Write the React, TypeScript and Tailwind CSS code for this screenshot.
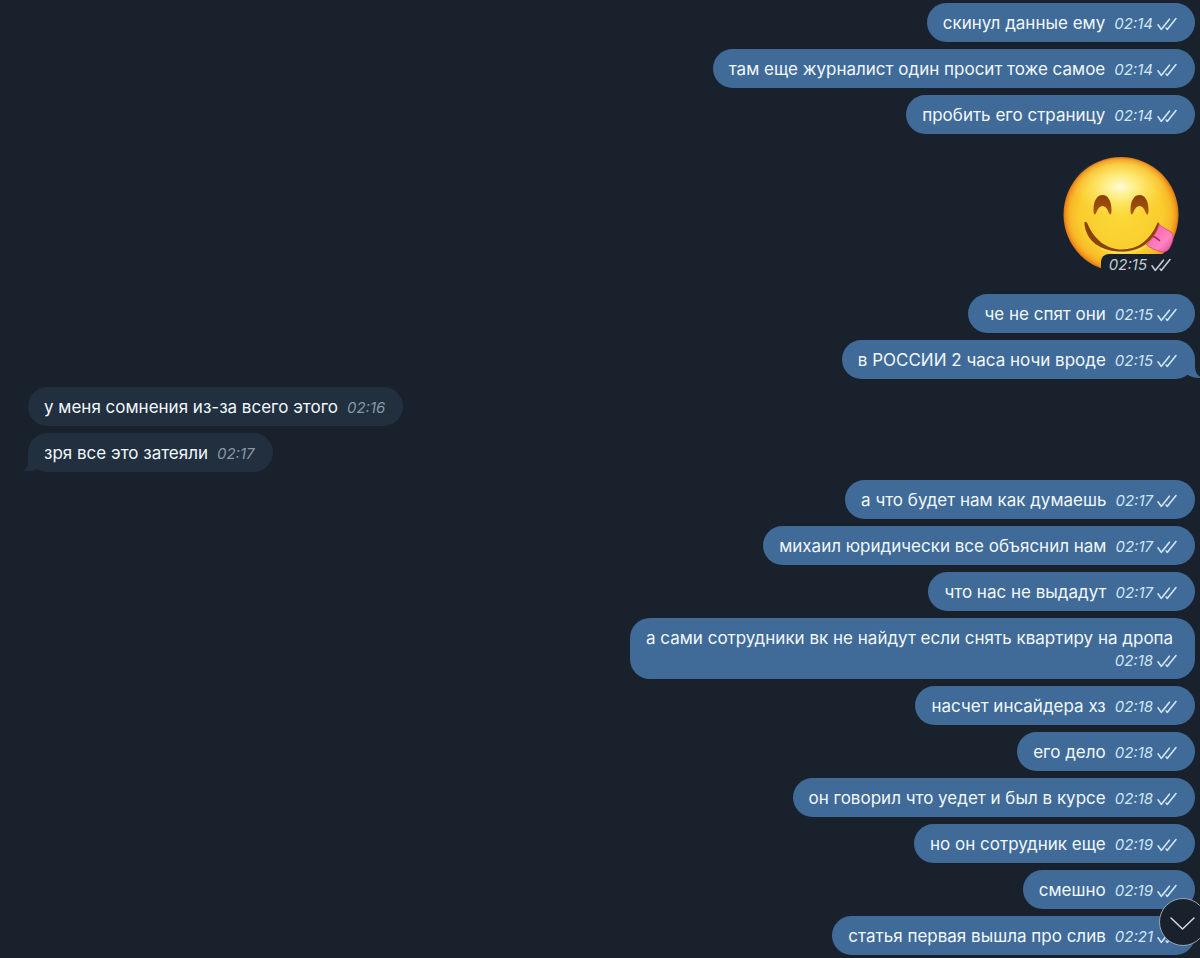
type Message = { id: number; text: string; time: string };
type Group = { id: number; mine: boolean; tail: boolean; messages: Message[] };

const opening: Group = {
  id: 1,
  mine: true,
  tail: false,
  messages: [
    { id: 1, text: "скинул данные ему", time: "02:14" },
    { id: 2, text: "там еще журналист один просит тоже самое", time: "02:14" },
    { id: 3, text: "пробить его страницу", time: "02:14" },
  ],
};

const groups: Group[] = [
  {
    id: 2,
    mine: true,
    tail: true,
    messages: [
      { id: 4, text: "че не спят они", time: "02:15" },
      { id: 5, text: "в РОССИИ 2 часа ночи вроде", time: "02:15" },
    ],
  },
  {
    id: 3,
    mine: false,
    tail: true,
    messages: [
      { id: 6, text: "у меня сомнения из-за всего этого", time: "02:16" },
      { id: 7, text: "зря все это затеяли", time: "02:17" },
    ],
  },
  {
    id: 4,
    mine: true,
    tail: false,
    messages: [
      { id: 8, text: "а что будет нам как думаешь", time: "02:17" },
      { id: 9, text: "михаил юридически все объяснил нам", time: "02:17" },
      { id: 10, text: "что нас не выдадут", time: "02:17" },
      { id: 11, text: "а сами сотрудники вк не найдут если снять квартиру на дропа", time: "02:18" },
      { id: 12, text: "насчет инсайдера хз", time: "02:18" },
      { id: 13, text: "его дело", time: "02:18" },
      { id: 14, text: "он говорил что уедет и был в курсе", time: "02:18" },
      { id: 15, text: "но он сотрудник еще", time: "02:19" },
      { id: 16, text: "смешно", time: "02:19" },
      { id: 17, text: "статья первая вышла про слив", time: "02:21" },
    ],
  },
];

function ReadChecks() {
  return (
    <svg width="20" height="14" viewBox="0 0 20 14" fill="none" stroke="currentColor" strokeWidth="1.6" strokeLinecap="round" strokeLinejoin="round" aria-hidden="true">
      <path d="M1 7.800 4.200 12.400 12.400 2.200" />
      <path d="M9.200 11 10.200 12.400 19 1.600" />
    </svg>
  );
}

function Stamp({ time, mine }: { time: string; mine: boolean }) {
  return (
    <span className="ml-auto flex items-center gap-1 pt-0.5">
      <time className="text-[15px] leading-5 italic">{time}</time>
      {mine && <ReadChecks />}
    </span>
  );
}

function Tail({ mine }: { mine: boolean }) {
  return mine ? (
    <svg className="absolute -right-[7px] bottom-0 text-[#406a97]" width="24" height="20" viewBox="0 0 24 20" fill="currentColor" aria-hidden="true">
      <path d="M0 0H17V8C17.2 13 19.5 17 24 18.6C19 19.8 14 18.5 9 15.6L0 19Z" />
    </svg>
  ) : (
    <svg className="absolute -left-[5px] bottom-0 text-[#212f3f]" width="24" height="20" viewBox="0 0 24 20" fill="currentColor" aria-hidden="true">
      <path d="M24 0H5V8C5 13 3.5 17 0 18.8C5 19.8 10 19 14 17L24 20Z" />
    </svg>
  );
}

function Bubble({ message, mine, tail }: { message: Message; mine: boolean; tail: boolean }) {
  return (
    <li
      className={
        mine
          ? "relative flex max-w-[565px] flex-wrap gap-x-[9px] self-end rounded-[20px] bg-[#406a97] pt-[9px] pr-[18px] pb-2 pl-4 text-[#cfe6f8]"
          : "relative flex max-w-[565px] flex-wrap gap-x-[9px] self-start rounded-[20px] bg-[#212f3f] pt-[9px] pr-[18px] pb-2 pl-4 text-[#8697a8]"
      }
    >
      {tail && <Tail mine={mine} />}
      <p className="relative text-[17px] leading-[22px] text-[#f0f8fd]">{message.text}</p>
      <Stamp time={message.time} mine={mine} />
    </li>
  );
}

function MessageGroup({ group }: { group: Group }) {
  return (
    <ul className="flex flex-col gap-[7px]">
      {group.messages.map((m, i) => (
        <Bubble key={m.id} message={m} mine={group.mine} tail={group.tail && i === group.messages.length - 1} />
      ))}
    </ul>
  );
}

function YumFace() {
  return (
    <svg width="118" height="118" viewBox="0 0 118 118" role="img" aria-label="😋">
      <defs>
        <radialGradient id="face" cx="0.5" cy="0.5" r="0.5">
          <stop offset="0" stopColor="#fbd936" />
          <stop offset="0.72" stopColor="#f9cd2d" />
          <stop offset="0.88" stopColor="#f8b927" />
          <stop offset="0.95" stopColor="#f39b1f" />
          <stop offset="1" stopColor="#dc7414" />
        </radialGradient>
        <radialGradient id="shine" cx="0.5" cy="0.45" r="0.5">
          <stop offset="0" stopColor="#fffbd7" />
          <stop offset="0.35" stopColor="#fff28f" stopOpacity="0.85" />
          <stop offset="1" stopColor="#fbe052" stopOpacity="0" />
        </radialGradient>
        <linearGradient id="eye" x1="0" y1="0" x2="0" y2="1">
          <stop offset="0" stopColor="#8a3f0a" />
          <stop offset="1" stopColor="#a9560f" />
        </linearGradient>
        <linearGradient id="tongue" x1="0" y1="0" x2="1" y2="1">
          <stop offset="0" stopColor="#ee5ba1" />
          <stop offset="0.65" stopColor="#ff83c2" />
          <stop offset="1" stopColor="#e63f91" />
        </linearGradient>
      </defs>
      <circle cx="59" cy="58.500" r="57.500" fill="url(#face)" />
      <ellipse cx="58" cy="34" rx="48" ry="32" fill="url(#shine)" />
      <path d="M31.500 54C31.500 45 35 39 40.500 39C46 39 49.500 45 49.500 54C49.500 59 48 60 46.500 56C45 52 43 50 40.500 50C38 50 36 52 34.500 56C33 60 31.500 59 31.500 54Z" fill="url(#eye)" />
      <path d="M68.500 54C68.500 45 72 39 77.500 39C83 39 86.500 45 86.500 54C86.500 59 85 60 83.500 56C82 52 80 50 77.500 50C75 50 73 52 71.500 56C70 60 68.500 59 68.500 54Z" fill="url(#eye)" />
      <path d="M22.500 68C22 65.500 24 65 25.200 67C32 84 45 93.500 60 93.500C76 93.500 88 84 95 68C96 65.500 98 66.500 97 69.500C90 88 76 95.500 59 95.500C39 95.500 24 85 22.500 68Z" fill="#8b4108" />
      <path d="M39 92.500C51 98.500 72 99 84 90" fill="none" stroke="#fff07a" strokeWidth="1.500" opacity="0.6" />
      <path d="M97 68.500C100 71 105 73.500 109 76C112.500 79 111 85 109 89C107 94.500 103 97 98.500 95.500C93 94 88 92 84.500 88.500C90 83.500 95 77 97 68.500Z" fill="url(#tongue)" stroke="#d93d84" strokeWidth="0.8" />
      <path d="M91 80.500C94 81 96 83 97.500 84.500" fill="none" stroke="#a8265f" strokeWidth="1.600" strokeLinecap="round" />
    </svg>
  );
}

export default function App() {
  return (
    <main className="relative min-h-screen overflow-hidden bg-[#19222c] pt-[3px] pr-[5px] pb-[3px] pl-7 font-['Inter','Noto_Sans',sans-serif]">
      <MessageGroup group={opening} />
      <div className="flex justify-end pt-[22px] pr-[15px] pb-5">
        <div className="relative">
          <YumFace />
          <div className="absolute right-0 bottom-0 flex h-5 items-center rounded-tl-lg bg-[#19222c] pr-[9px] pl-2 text-[#c3ccd4]">
            <Stamp time="02:15" mine />
          </div>
        </div>
      </div>
      <div className="flex flex-col gap-2">
        {groups.map((g) => (
          <MessageGroup key={g.id} group={g} />
        ))}
      </div>
      <button
        type="button"
        aria-label="Прокрутить вниз"
        className="absolute -right-[7px] bottom-3 flex size-12 items-center justify-center rounded-full border border-[#98a5b2] bg-[#19222c] text-[#d3dce4]"
      >
        <svg width="26" height="16" viewBox="0 0 26 16" fill="none" stroke="currentColor" strokeWidth="1.5" strokeLinecap="round" strokeLinejoin="round" aria-hidden="true">
          <path d="M1 4 12.500 15 24 4" />
        </svg>
      </button>
    </main>
  );
}
